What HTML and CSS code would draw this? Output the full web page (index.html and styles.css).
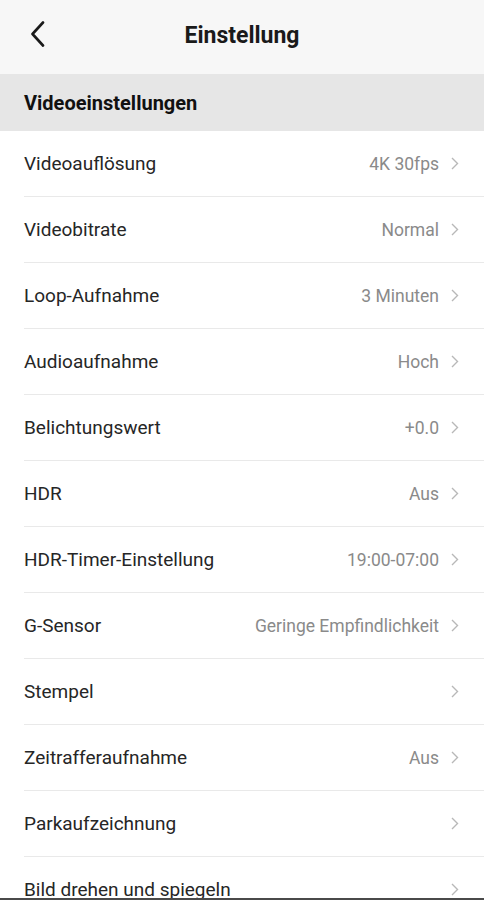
FILE: index.html
```html
<!DOCTYPE html>
<html lang="de">
<head>
<meta charset="utf-8">
<title>Einstellung</title>
<link rel="stylesheet" href="styles.css">
</head>
<body>
<header class="topbar">
  <span class="back">
    <svg width="16" height="26" viewBox="0 0 16 26"><path d="M13 1.5 L2.5 13 L13 24.5" fill="none" stroke="#1a1a1a" stroke-width="2.6" stroke-linecap="round" stroke-linejoin="round"/></svg>
  </span>
  <h1 class="title">Einstellung</h1>
</header>
<div class="section">Videoeinstellungen</div>
<ul class="list">
  <li class="row"><span class="label">Videoauflösung</span><span class="value">4K 30fps</span><span class="chev"><svg width="8" height="13" viewBox="0 0 8 13"><path d="M1 1 L6.5 6.5 L1 12" fill="none" stroke="#b8b8b8" stroke-width="1.4"/></svg></span></li>
  <li class="row"><span class="label">Videobitrate</span><span class="value">Normal</span><span class="chev"><svg width="8" height="13" viewBox="0 0 8 13"><path d="M1 1 L6.5 6.5 L1 12" fill="none" stroke="#b8b8b8" stroke-width="1.4"/></svg></span></li>
  <li class="row"><span class="label">Loop-Aufnahme</span><span class="value">3 Minuten</span><span class="chev"><svg width="8" height="13" viewBox="0 0 8 13"><path d="M1 1 L6.5 6.5 L1 12" fill="none" stroke="#b8b8b8" stroke-width="1.4"/></svg></span></li>
  <li class="row"><span class="label">Audioaufnahme</span><span class="value">Hoch</span><span class="chev"><svg width="8" height="13" viewBox="0 0 8 13"><path d="M1 1 L6.5 6.5 L1 12" fill="none" stroke="#b8b8b8" stroke-width="1.4"/></svg></span></li>
  <li class="row"><span class="label">Belichtungswert</span><span class="value">+0.0</span><span class="chev"><svg width="8" height="13" viewBox="0 0 8 13"><path d="M1 1 L6.5 6.5 L1 12" fill="none" stroke="#b8b8b8" stroke-width="1.4"/></svg></span></li>
  <li class="row"><span class="label">HDR</span><span class="value">Aus</span><span class="chev"><svg width="8" height="13" viewBox="0 0 8 13"><path d="M1 1 L6.5 6.5 L1 12" fill="none" stroke="#b8b8b8" stroke-width="1.4"/></svg></span></li>
  <li class="row"><span class="label">HDR-Timer-Einstellung</span><span class="value">19:00-07:00</span><span class="chev"><svg width="8" height="13" viewBox="0 0 8 13"><path d="M1 1 L6.5 6.5 L1 12" fill="none" stroke="#b8b8b8" stroke-width="1.4"/></svg></span></li>
  <li class="row"><span class="label">G-Sensor</span><span class="value">Geringe Empfindlichkeit</span><span class="chev"><svg width="8" height="13" viewBox="0 0 8 13"><path d="M1 1 L6.5 6.5 L1 12" fill="none" stroke="#b8b8b8" stroke-width="1.4"/></svg></span></li>
  <li class="row"><span class="label">Stempel</span><span class="value"></span><span class="chev"><svg width="8" height="13" viewBox="0 0 8 13"><path d="M1 1 L6.5 6.5 L1 12" fill="none" stroke="#b8b8b8" stroke-width="1.4"/></svg></span></li>
  <li class="row"><span class="label">Zeitrafferaufnahme</span><span class="value">Aus</span><span class="chev"><svg width="8" height="13" viewBox="0 0 8 13"><path d="M1 1 L6.5 6.5 L1 12" fill="none" stroke="#b8b8b8" stroke-width="1.4"/></svg></span></li>
  <li class="row"><span class="label">Parkaufzeichnung</span><span class="value"></span><span class="chev"><svg width="8" height="13" viewBox="0 0 8 13"><path d="M1 1 L6.5 6.5 L1 12" fill="none" stroke="#b8b8b8" stroke-width="1.4"/></svg></span></li>
  <li class="row"><span class="label">Bild drehen und spiegeln</span><span class="value"></span><span class="chev"><svg width="8" height="13" viewBox="0 0 8 13"><path d="M1 1 L6.5 6.5 L1 12" fill="none" stroke="#b8b8b8" stroke-width="1.4"/></svg></span></li>
</ul>
<div class="bottomline"></div>
</body>
</html>
```

FILE: styles.css
```css
html, body {
  margin: 0;
  padding: 0;
  background: #ffffff;
  font-family: Roboto, "Noto Sans", "Liberation Sans", sans-serif;
  overflow: hidden;
}
.topbar {
  height: 74px;
  background: #f7f7f7;
  display: flex;
  align-items: center;
  justify-content: center;
  position: relative;
}
.back {
  position: absolute;
  left: 30px;
  top: 21px;
  display: flex;
}
.title {
  margin: 0;
  font-size: 23px;
  font-weight: 700;
  color: #1a1a1a;
  padding-bottom: 4px;
}
.section {
  height: 57px;
  background: #e6e6e6;
  display: flex;
  align-items: center;
  padding-left: 24px;
  font-size: 20px;
  font-weight: 700;
  color: #111;
}
.list {
  list-style: none;
  margin: 0;
  padding: 0 0 0 24px;
}
.row {
  height: 65px;
  border-bottom: 1px solid #e9e9e9;
  display: flex;
  align-items: center;
  padding-right: 25px;
}
.label {
  flex: 1;
  font-size: 19px;
  color: #262626;
}
.value {
  font-size: 17.5px;
  color: #8a8a8a;
}
.chev {
  display: flex;
  margin-left: 12px;
  width: 8px;
}
.bottomline {
  position: fixed;
  left: 0;
  right: 0;
  bottom: 0;
  height: 2px;
  background: #4a4a4a;
}
```
